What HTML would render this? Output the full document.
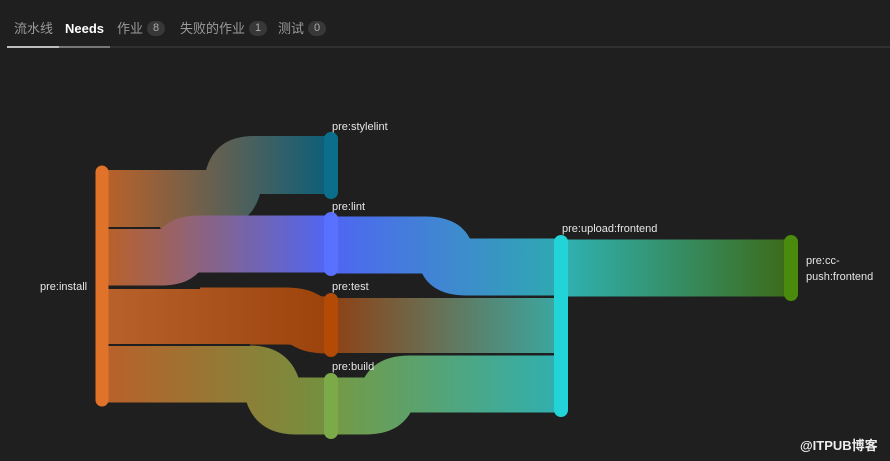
<!DOCTYPE html>
<html><head><meta charset="utf-8"><style>
html,body{margin:0;padding:0;background:#1f1f1f;width:890px;height:461px;overflow:hidden;font-family:"Liberation Sans","Noto Sans CJK SC",sans-serif;}
.tabs{position:absolute;left:0;top:0;width:890px;height:48px;}
.tab{position:absolute;top:20px;height:18px;line-height:18px;font-size:13px;color:#9a9a9a;white-space:nowrap}
.badge{display:inline-block;background:#383838;color:#aaa;border-radius:8px;font-size:11px;padding:0 6px;margin-left:4px;line-height:15px;vertical-align:top;margin-top:1px}
.line{position:absolute;top:46px;left:7px;right:0;height:2px;background:#303030}
.sel1{position:absolute;top:46px;left:7px;width:52px;height:2px;background:#bdbdbd}
.sel2{position:absolute;top:46px;left:59px;width:51px;height:2px;background:#777}
svg{position:absolute;left:0;top:0}
svg text{font-family:"Liberation Sans",sans-serif;font-size:11px;fill:#e6e6e6}
</style></head><body>
<div class="tabs">
<div class="tab" style="left:14px">流水线</div>
<div class="tab" style="left:65px;color:#fff;font-weight:bold">Needs</div>
<div class="tab" style="left:117px">作业<span class="badge">8</span></div>
<div class="tab" style="left:180px">失败的作业<span class="badge">1</span></div>
<div class="tab" style="left:278px">测试<span class="badge">0</span></div>
<div class="line"></div><div class="sel1"></div><div class="sel2"></div>
</div>
<svg width="890" height="461" viewBox="0 0 890 461">
<defs>
<linearGradient id="g1" gradientUnits="userSpaceOnUse" x1="108" x2="330"><stop offset="0" stop-color="#b8612a"/><stop offset="1" stop-color="#0b5f7a"/></linearGradient>
<linearGradient id="g2" gradientUnits="userSpaceOnUse" x1="108" x2="330"><stop offset="0" stop-color="#b8612a"/><stop offset="1" stop-color="#4f66f5"/></linearGradient>
<linearGradient id="g3" gradientUnits="userSpaceOnUse" x1="108" x2="330"><stop offset="0" stop-color="#b8612a"/><stop offset="1" stop-color="#9c430c"/></linearGradient>
<linearGradient id="g4" gradientUnits="userSpaceOnUse" x1="108" x2="330"><stop offset="0" stop-color="#b8612a"/><stop offset="1" stop-color="#72913f"/></linearGradient>
<linearGradient id="g5" gradientUnits="userSpaceOnUse" x1="338" x2="560"><stop offset="0" stop-color="#4e68f0"/><stop offset="1" stop-color="#2fa9b0"/></linearGradient>
<linearGradient id="g6" gradientUnits="userSpaceOnUse" x1="338" x2="560"><stop offset="0" stop-color="#8c4418"/><stop offset="1" stop-color="#3aa8a2"/></linearGradient>
<linearGradient id="g7" gradientUnits="userSpaceOnUse" x1="338" x2="560"><stop offset="0" stop-color="#739a48"/><stop offset="1" stop-color="#30b0b0"/></linearGradient>
<linearGradient id="g8" gradientUnits="userSpaceOnUse" x1="568" x2="790"><stop offset="0" stop-color="#2fb0b0"/><stop offset="1" stop-color="#3d6a18"/></linearGradient>
</defs>
<g fill="none">
<path d="M100,199 H212 C248,199 218,165 254,165 H331" stroke="url(#g1)" stroke-width="58"/>
<path d="M100,257 H160 C190,257 170,244 200,244 H331" stroke="url(#g2)" stroke-width="57"/>
<path d="M100,316 H285 C312,316 300,325 328,325 H331" stroke="url(#g3)" stroke-width="57"/>
<path d="M100,374 H250 C285,374 260,406 295,406 H331" stroke="url(#g4)" stroke-width="57"/>
<path d="M331,245 H425 C462,245 430,267 467,267 H561" stroke="url(#g5)" stroke-width="57"/>
<path d="M331,325 H561" stroke="url(#g6)" stroke-width="57"/>
<path d="M331,406 H365 C400,406 375,384 410,384 H561" stroke="url(#g7)" stroke-width="57"/>
<path d="M561,268 H791" stroke="url(#g8)" stroke-width="57"/>
</g>
<g stroke="#1f1f1f" stroke-width="2">
<path d="M108,228 H160"/><path d="M108,288 H200"/><path d="M108,345 H250"/>
<path d="M330,297 H555"/><path d="M330,354 H555"/>
</g>
<g stroke-linecap="round" fill="none">
<path d="M102,172 V400" stroke="#e07329" stroke-width="13"/>
<path d="M331,139 V192" stroke="#0b6f8c" stroke-width="14"/>
<path d="M331,219 V269" stroke="#5a70ff" stroke-width="14"/>
<path d="M331,300 V350" stroke="#b34a05" stroke-width="14"/>
<path d="M331,380 V432" stroke="#7daa48" stroke-width="14"/>
<path d="M561,242 V410" stroke="#22d4d8" stroke-width="14"/>
<path d="M791,242 V294" stroke="#4a8a0c" stroke-width="14"/>
</g>
<text x="40" y="290">pre:install</text>
<text x="332" y="130">pre:stylelint</text>
<text x="332" y="210">pre:lint</text>
<text x="332" y="290">pre:test</text>
<text x="332" y="370">pre:build</text>
<text x="562" y="232">pre:upload:frontend</text>
<text x="806" y="264">pre:cc-</text>
<text x="806" y="280">push:frontend</text>
<text x="800" y="450" style="font-size:13px;font-weight:bold;fill:#eee;font-family:'Liberation Sans','Noto Sans CJK SC',sans-serif">@ITPUB博客</text>
</svg>
</body></html>
